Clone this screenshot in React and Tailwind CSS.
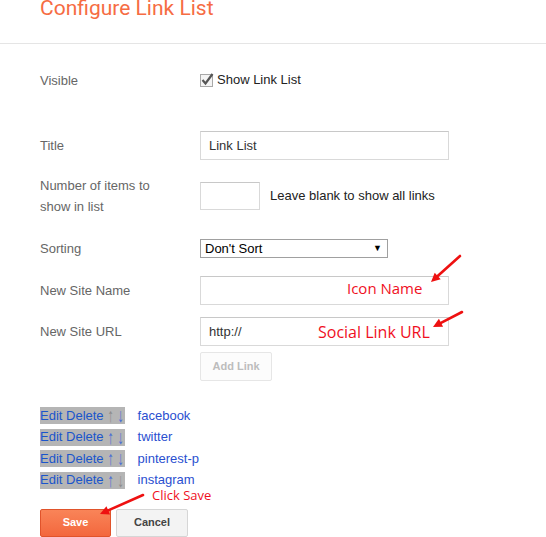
import React from "react";

const links = [
  { name: "facebook", upOff: true, downOff: false },
  { name: "twitter", upOff: false, downOff: false },
  { name: "pinterest-p", upOff: false, downOff: false },
  { name: "instagram", upOff: false, downOff: true },
];

function Row({ label, children, className = "" }) {
  return (
    <div className={`flex items-center ${className}`}>
      <div className="w-[160px] shrink-0 pr-[20px] text-[13px] leading-[21px] text-[#666]">
        {label}
      </div>
      {children}
    </div>
  );
}

function RedArrow({ x1, y1, x2, y2 }) {
  // line from tail (x1,y1) to tip (x2,y2) with filled head
  const dx = x2 - x1;
  const dy = y2 - y1;
  const len = Math.sqrt(dx * dx + dy * dy);
  const ux = dx / len;
  const uy = dy / len;
  const bx = x2 - ux * 9;
  const by = y2 - uy * 9;
  const px = -uy * 4.5;
  const py = ux * 4.5;
  return (
    <g>
      <line x1={x1} y1={y1} x2={bx} y2={by} stroke="#ee1111" strokeWidth="2.6" strokeLinecap="round" />
      <polygon points={`${x2},${y2} ${bx + px},${by + py} ${bx - px},${by - py}`} fill="#ee1111" />
    </g>
  );
}

export default function App() {
  return (
    <div className="relative w-[546px] h-[537px] overflow-hidden bg-white font-['Liberation_Sans',Arial,sans-serif]">
      {/* header */}
      <div className="h-[44px] border-b border-[#e5e5e5]">
        <h1 className="pl-[40px] text-[21px] leading-[16px] font-normal text-[#f66c43] font-['Roboto',sans-serif]">
          Configure Link List
        </h1>
      </div>

      <div className="pl-[40px]">
        <Row label="Visible" className="mt-[22px] h-[28px]">
          <label className="flex items-center text-[13px] text-[#222]">
            <span className="relative w-[13px] h-[13px] border border-[#a8a8a8] bg-[#f4f4f4]">
              <svg className="absolute -left-[1px] -top-[3px]" width="15" height="15" viewBox="0 0 15 15">
                <path d="M2.5 8 L5.5 11.5 L12.5 2" fill="none" stroke="#555" strokeWidth="2.2" />
              </svg>
            </span>
            <span className="ml-[4px]">Show Link List</span>
          </label>
        </Row>

        <Row label="Title" className="mt-[37px]">
          <div className="w-[249px] h-[29px] border border-[#d9d9d9] border-t-[#c8c8c8] pl-[8px] flex items-center text-[13px] text-[#333]">
            Link List
          </div>
        </Row>

        <Row
          label={
            <>
              Number of items to
              <br />
              show in list
            </>
          }
          className="mt-[15px]"
        >
          <div className="w-[60px] h-[28px] border border-[#d9d9d9] border-t-[#c8c8c8]" />
          <span className="ml-[10px] text-[13px] text-[#222]">Leave blank to show all links</span>
        </Row>

        <Row label="Sorting" className="mt-[21px]">
          <div className="w-[188px] h-[19px] border border-[#a0a0a0] pl-[4px] pr-[5px] flex items-center justify-between text-[13px] text-black">
            <span>Don't Sort</span>
            <span className="text-[9px] leading-none">▼</span>
          </div>
        </Row>

        <Row label="New Site Name" className="mt-[17px]">
          <div className="w-[249px] h-[29px] border border-[#d9d9d9] border-t-[#c8c8c8]" />
        </Row>

        <Row label="New Site URL" className="mt-[12px]">
          <div className="w-[249px] h-[29px] border border-[#d9d9d9] border-t-[#c8c8c8] pl-[8px] flex items-center text-[13px] text-[#333]">
            http://
          </div>
        </Row>

        <div className="mt-[6px] ml-[160px] w-[72px] h-[29px] border border-[#e6e6e6] bg-[#fcfcfc] rounded-[2px] flex items-center justify-center text-[11px] font-bold text-[#bdbdbd]">
          Add Link
        </div>

        <div className="mt-[26px] flex flex-col gap-[4.5px] text-[13px]">
          {links.map((l) => (
            <div key={l.name} className="flex items-center h-[17px]">
              <span className="flex items-center h-[17px] bg-[#b5b5b5] text-[#1a55cc] pr-[1px]">
                <span>Edit Delete</span>
                <span className={`ml-[4px] w-[6px] inline-block text-center leading-none scale-y-150 ${l.upOff ? "text-[#8c8c8c]" : "text-[#4a6fd6]"}`}>↑</span>
                <span className={`ml-[4px] w-[6px] inline-block text-center leading-none scale-y-150 ${l.downOff ? "text-[#8c8c8c]" : "text-[#4a6fd6]"}`}>↓</span>
              </span>
              <span className="ml-[13px] text-[#2a4fd0]">{l.name}</span>
            </div>
          ))}
        </div>

        <div className="mt-[20px] flex gap-[5px]">
          <button className="w-[71px] h-[28px] rounded-[2px] border border-[#e0532b] bg-gradient-to-b from-[#f98458] to-[#f3673d] text-white text-[11px] font-bold">
            Save
          </button>
          <button className="w-[72px] h-[28px] rounded-[2px] border border-[#d6d6d6] bg-[#f3f3f3] text-[#444] text-[11px] font-bold">
            Cancel
          </button>
        </div>
      </div>

      {/* annotations */}
      <span className="absolute left-[347px] top-[278px] text-[15px] leading-[20px] text-[#f0101e] font-['Open_Sans',sans-serif]">
        Icon Name
      </span>
      <span className="absolute left-[318px] top-[321px] text-[16px] leading-[22px] text-[#f0101e] font-['Open_Sans',sans-serif]">
        Social Link URL
      </span>
      <span className="absolute left-[152px] top-[486px] text-[13px] leading-[18px] text-[#f0101e] font-['Open_Sans',sans-serif]">
        Click Save
      </span>
      <svg className="absolute left-0 top-0 pointer-events-none" width="546" height="537">
        <RedArrow x1={460} y1={256} x2={431} y2={282} />
        <RedArrow x1={462} y1={312} x2={433} y2={327} />
        <RedArrow x1={143} y1={495} x2={100} y2={514} />
      </svg>
    </div>
  );
}
